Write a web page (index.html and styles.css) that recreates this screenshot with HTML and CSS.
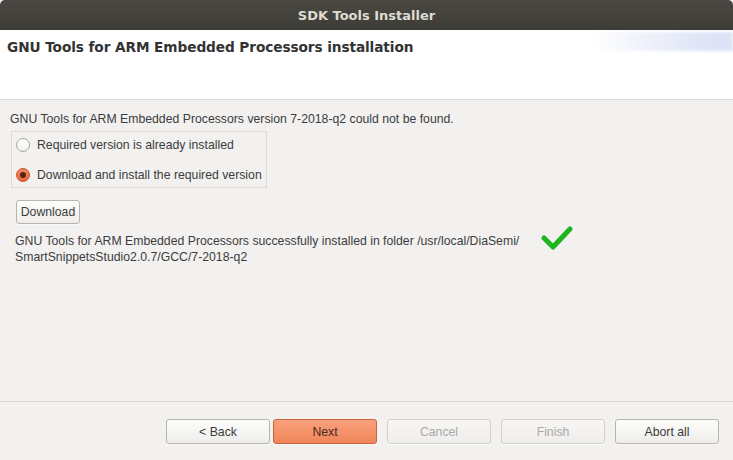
FILE: index.html
```html
<!DOCTYPE html>
<html>
<head>
<meta charset="utf-8">
<link rel="stylesheet" href="styles.css">
</head>
<body>
<div class="window">
  <div class="titlebar">SDK Tools Installer</div>
  <div class="header">
    <div class="header-title">GNU Tools for ARM Embedded Processors installation</div>
    <div class="header-glow"></div>
  </div>
  <div class="content">
    <p class="intro">GNU Tools for ARM Embedded Processors version 7-2018-q2 could not be found.</p>
    <div class="radio-group">
      <label class="radio-row"><span class="radio"></span>Required version is already installed</label>
      <label class="radio-row"><span class="radio checked"></span>Download and install the required version</label>
    </div>
    <div class="download-row"><button class="btn small">Download</button></div>
    <div class="status">
      <p class="status-text">GNU Tools for ARM Embedded Processors successfully installed in folder /usr/local/DiaSemi/<br>SmartSnippetsStudio2.0.7/GCC/7-2018-q2</p>
      <svg class="check" width="32" height="26" viewBox="0 0 32 26"><path d="M3 12 L12 21 L29 3" fill="none" stroke="#1fb51f" stroke-width="5" stroke-linecap="round" stroke-linejoin="round"/></svg>
    </div>
  </div>
  <div class="footer">
    <button class="btn">&lt; Back</button>
    <button class="btn primary">Next</button>
    <button class="btn disabled gap">Cancel</button>
    <button class="btn disabled gap">Finish</button>
    <button class="btn gap">Abort all</button>
  </div>
</div>
</body>
</html>
```
FILE: styles.css
```css
* { box-sizing: border-box; }
html, body { margin: 0; padding: 0; }
body {
  width: 733px;
  height: 460px;
  overflow: hidden;
  background: #f2f1f0;
  font-family: "Liberation Sans", Arial, sans-serif;
  font-size: 12.25px;
  color: #3c3c3c;
}
.window {
  width: 733px;
  height: 460px;
  display: flex;
  flex-direction: column;
  background: #f2f1f0;
}
.titlebar {
  height: 30px;
  flex: none;
  background: linear-gradient(#494842, #3d3c37);
  border-radius: 5px 5px 0 0;
  color: #dfdbd2;
  font-family: "DejaVu Sans", sans-serif;
  font-weight: bold;
  font-size: 13px;
  display: flex;
  align-items: center;
  justify-content: center;
  padding-top: 1px;
}
.header {
  position: relative;
  height: 70px;
  flex: none;
  background: #fff;
  border-bottom: 1px solid #dad8d3;
  overflow: hidden;
}
.header-title {
  position: relative;
  z-index: 1;
  padding: 9px 0 0 7px;
  font-family: "DejaVu Sans", sans-serif;
  font-weight: bold;
  font-size: 13.7px;
  color: #333;
  letter-spacing: -0.1px;
}
.header-glow {
  position: absolute;
  right: 0;
  top: 2px;
  width: 140px;
  height: 19px;
  background: linear-gradient(90deg, rgba(220,227,246,0), #dfe5f6 75%, #dce3f5);
  filter: blur(1.5px);
}
.content {
  flex: 1;
  padding: 12px 0 0 10px;
}
.intro {
  margin: 0 0 5px 0;
  line-height: 14px;
  color: #3c3c3c;
}
.radio-group {
  margin-left: 1px;
  width: 256px;
  height: 57px;
  border: 1px solid #dcdad5;
  display: flex;
  flex-direction: column;
  padding: 6px 0 0 4px;
  gap: 16px;
}
.radio-row {
  display: flex;
  align-items: center;
  gap: 7px;
  height: 14px;
  white-space: nowrap;
}
.radio {
  width: 14px;
  height: 14px;
  border-radius: 50%;
  border: 1px solid #a8a49e;
  background: linear-gradient(#fff, #f1f0ee);
  flex: none;
  position: relative;
}
.radio.checked {
  border-color: #c7532a;
  background: linear-gradient(#f5875f, #e8683d);
}
.radio.checked::after {
  content: "";
  position: absolute;
  left: 3px;
  top: 3px;
  width: 6px;
  height: 6px;
  border-radius: 50%;
  background: #5a2416;
}
.download-row {
  margin: 12px 0 0 6px;
}
.btn {
  font-family: "Liberation Sans", Arial, sans-serif;
  font-size: 12.25px;
  color: #3c3c3c;
  width: 104px;
  height: 25px;
  border: 1px solid #b8b5ae;
  border-radius: 3px;
  background: linear-gradient(#fdfdfc, #eeedeb);
  padding: 0;
  box-shadow: 0 1px 0 rgba(255,255,255,0.6);
}
.btn.small {
  width: 64px;
  height: 24px;
}
.btn.primary {
  background: linear-gradient(#f9a07c, #f08559);
  border-color: #c8643f;
  color: #4a2a1f;
}
.btn.disabled {
  color: #a9a8a5;
  border-color: #d3d1cc;
  background: linear-gradient(#f7f6f5, #efeeec);
}
.status {
  margin: 3px 0 0 5px;
  display: flex;
  align-items: flex-start;
}
.status-text {
  margin: 6px 0 0 0;
  line-height: 16px;
  width: 521px;
}
.check {
  margin-left: 5px;
  margin-top: -1px;
}
.footer {
  height: 59px;
  flex: none;
  border-top: 1px solid #dad8d3;
  display: flex;
  align-items: flex-start;
  padding: 17px 0 0 166px;
  gap: 3px;
}
.btn.gap { margin-left: 7px; }
```
